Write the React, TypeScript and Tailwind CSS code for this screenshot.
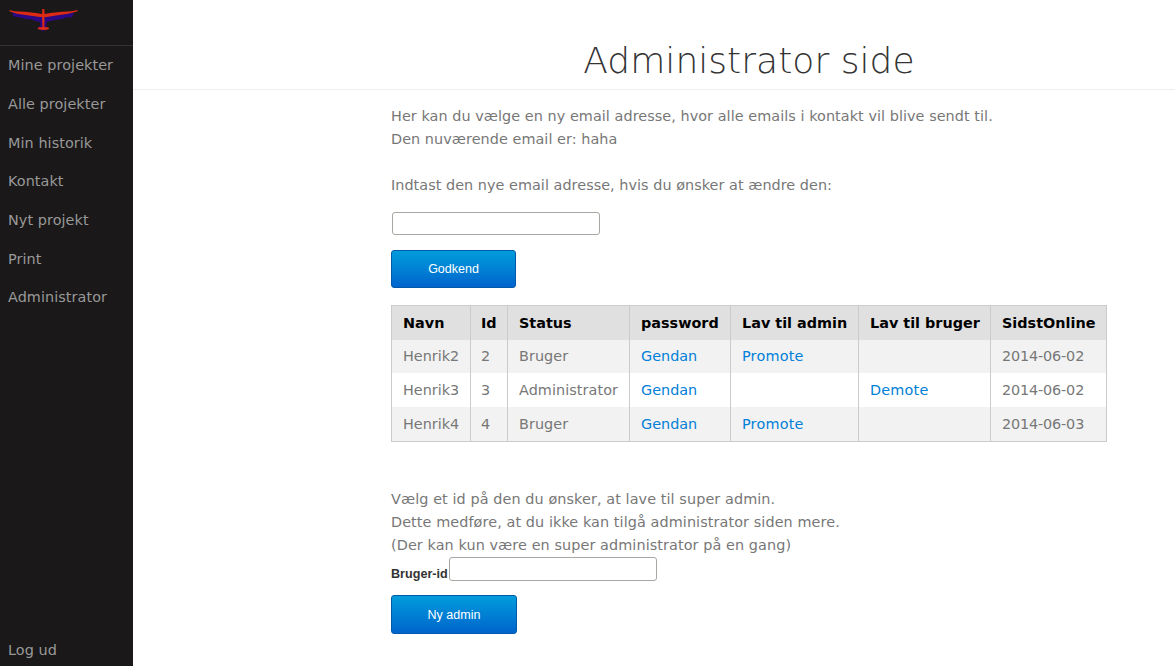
const menu = ['Mine projekter', 'Alle projekter', 'Min historik', 'Kontakt', 'Nyt projekt', 'Print', 'Administrator'];

const columns = ['Navn', 'Id', 'Status', 'password', 'Lav til admin', 'Lav til bruger', 'SidstOnline'];

const users = [
  { name: 'Henrik2', id: 2, status: 'Bruger', admin: false, seen: '2014-06-02' },
  { name: 'Henrik3', id: 3, status: 'Administrator', admin: true, seen: '2014-06-02' },
  { name: 'Henrik4', id: 4, status: 'Bruger', admin: false, seen: '2014-06-03' },
];

function Logo() {
  return (
    <svg className="block h-[45px] w-[90px]" viewBox="0 0 90 45" aria-hidden="true">
      <path
        d="M12 12 L13.500 16.600 L20 17.500 L27 19.300 L32 19.400 L35 21 L39.600 21.800 L40.600 25 L38 28 L39.500 30 L43.500 31 L48 29 L46.300 26 L46.800 21.800 L51 21 L55 20 L61 19.300 L67 17.500 L72 17.200 L74.200 12.400 L43 14 Z"
        fill="#2c0882"
      />
      <path
        d="M9 9.900 L15 11.200 L25 11.800 L36 13 L43.300 14.200 L50 13 L62 11.800 L71 11.200 L78 9.900 L77 11.400 L68 13.800 L56 15.400 L47 17 L40 17 L29 15.600 L17 13.700 L10 11.600 Z"
        fill="#dc2a14"
      />
      <path d="M42.300 9h2l.4 6-.5 13.500h-1.700L42 15z" fill="#dc2a14" />
      <ellipse cx="43.400" cy="28.400" rx="5.800" ry="1.500" fill="#dc2a14" />
    </svg>
  );
}

function Link({ children }: { children: string }) {
  return (
    <a href="#" className={`text-[#0080d8] ${children === 'Gendan' ? 'tracking-normal' : 'tracking-[0.2px]'}`}>
      {children}
    </a>
  );
}

function Submit({ children, className }: { children: string; className: string }) {
  return (
    <button
      type="button"
      className={`block rounded-[3px] border border-[#0058a8] bg-linear-to-b from-[#049cdb] to-[#0064cd] font-['Liberation_Sans',sans-serif] text-[12.5px] leading-4 tracking-normal text-white ${className}`}
    >
      {children}
    </button>
  );
}

export default function App() {
  return (
    <div className="flex h-[666px] w-full overflow-hidden bg-white font-['DejaVu_Sans',sans-serif] text-[14.4px] leading-[23px] text-[#777]">
      <nav className="flex w-[133px] shrink-0 flex-col bg-[#1a1818] tracking-[0.07px] text-[#999]">
        <div className="h-[46px] border-b border-[#333]">
          <Logo />
        </div>
        <ul className="flex flex-col pt-[0.25px]">
          {menu.map((item) => (
            <li key={item} className="h-[38.7px] px-2 leading-[38.7px]">{item}</li>
          ))}
        </ul>
        <div className="mt-auto h-[36px] px-2 leading-[41px]">Log ud</div>
      </nav>

      <main className="min-w-0 flex-1">
        <header className="h-[90px] border-b border-[#eee] pt-[38px] pl-[58px] text-center">
          <h1 className="pl-[132px] text-[36px] leading-[46px] font-extralight tracking-[0.04px] text-[#333]">Administrator side</h1>
        </header>

        <div className="pl-[258px]">
          <p className="pt-[15px] tracking-[0.06px]">
            Her kan du vælge en ny email adresse, hvor alle emails i kontakt vil blive sendt til.
            <br />
            Den nuværende email er: haha
          </p>
          <p className="mt-[23px] tracking-[0.04px]">Indtast den nye email adresse, hvis du ønsker at ændre den:</p>
          <input className="mt-[15px] ml-px block h-[23px] w-[208px] rounded-[3px] border border-[#aaa6a1] bg-white px-1" />
          <Submit className="mt-[15px] h-[38px] w-[125px]">Godkend</Submit>

          <table className="mt-[17px] w-[716px] table-fixed border-separate border-spacing-0 border border-l-0 border-[#cbcbcb] text-left">
            <colgroup>
              <col className="w-[79px]" />
              <col className="w-[37px]" />
              <col className="w-[122px]" />
              <col className="w-[101px]" />
              <col className="w-[128px]" />
              <col className="w-[132px]" />
              <col className="w-[116px]" />
            </colgroup>
            <thead className="bg-[#e0e0e0] text-black">
              <tr className="h-[34px]">
                {columns.map((c) => (
                  <th key={c} className={`border-l border-[#cbcbcb] p-0 font-bold whitespace-nowrap ${c === 'Id' ? 'pl-[10px]' : 'pl-[11px]'}`}>{c}</th>
                ))}
              </tr>
            </thead>
            <tbody>
              {users.map((u) => (
                <tr key={u.id} className="h-[33px] odd:bg-[#f2f2f2] [&:nth-child(n+2)]:h-[34px] [&>td]:border-l [&>td]:border-[#cbcbcb] [&>td]:p-0 [&>td]:pl-[11px]">
                  <td>{u.name}</td>
                  <td><span className="-ml-px">{u.id}</span></td>
                  <td className="tracking-[0.07px]">{u.status}</td>
                  <td><Link>Gendan</Link></td>
                  <td>{!u.admin && <Link>Promote</Link>}</td>
                  <td>{u.admin && <Link>Demote</Link>}</td>
                  <td className="tracking-[-0.15px]">{u.seen}</td>
                </tr>
              ))}
            </tbody>
          </table>

          <p className="mt-[46px] tracking-[0.09px]">
            Vælg et id på den du ønsker, at lave til super admin.
            <br />
            Dette medføre, at du ikke kan tilgå administrator siden mere.
            <br />
            (Der kan kun være en super administrator på en gang)
          </p>
          <label className="flex h-[24px]">
            <span className="w-[58px] pt-[9px] font-['Liberation_Sans',sans-serif] text-[12.6px] leading-4 font-bold whitespace-nowrap text-[#333]">Bruger-id</span>
            <input className="h-[24px] w-[208px] rounded-[3px] border border-[#aaa6a1] bg-white px-1" />
          </label>
          <Submit className="mt-[14px] h-[39px] w-[126px]">Ny admin</Submit>
        </div>
      </main>
    </div>
  );
}
